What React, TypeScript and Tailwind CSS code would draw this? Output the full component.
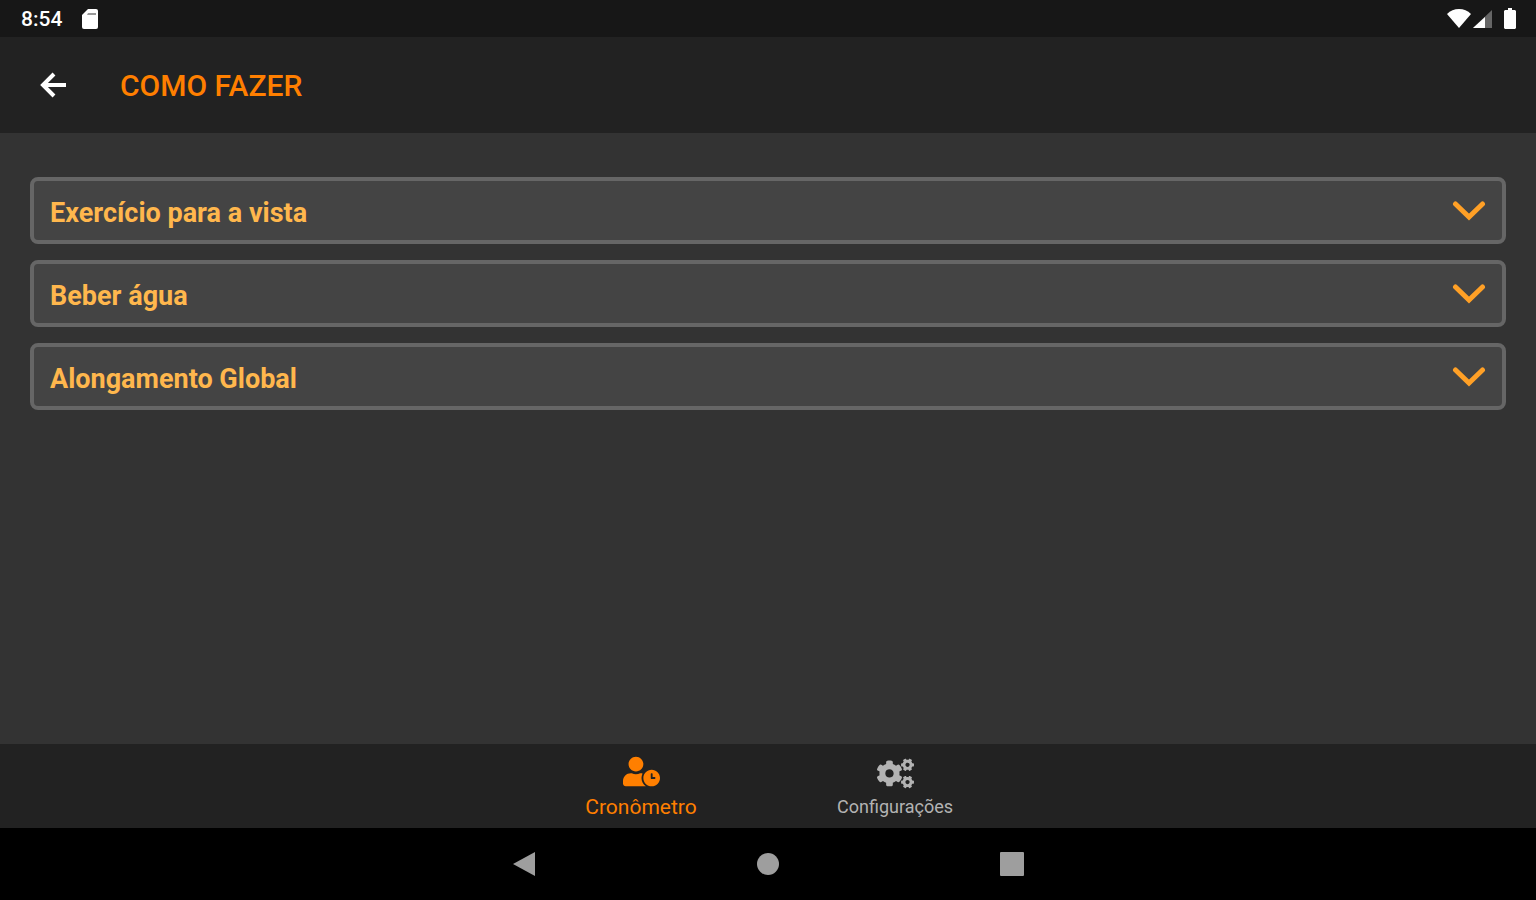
import React, { useState } from 'react';
import { FaCogs, FaUserClock } from 'react-icons/fa';

const TOPICS = ['Exercício para a vista', 'Beber água', 'Alongamento Global'];

function StatusBar() {
  return (
    <div className="flex h-[37px] items-center justify-between bg-[#171717] pl-[21px] pr-5 text-white">
      <div className="flex items-center gap-5">
        <span className="text-[21px] leading-6 font-medium">8:54</span>
        <svg viewBox="0 0 16 20" className="h-5 w-4" fill="currentColor" aria-hidden="true">
          <path d="M6 0h8a2 2 0 0 1 2 2v16a2 2 0 0 1-2 2H2a2 2 0 0 1-2-2V6z" />
          <path d="M6 4h8v2H5z" fill="#999" />
        </svg>
      </div>
      <div className="flex items-center">
        <svg viewBox="0 0 24 19" className="h-[19px] w-6" fill="currentColor" aria-hidden="true">
          <path d="M12 19 0 5Q5 0 12 0t12 5z" />
        </svg>
        <svg viewBox="0 0 19 18" className="ml-0.5 h-[18px] w-[19px]" aria-hidden="true">
          <path d="M19 0v18H0z" fill="#666" />
          <path d="M12 7v11H0z" fill="currentColor" />
        </svg>
        <svg viewBox="0 0 12 21" className="ml-3 h-[21px] w-3" fill="currentColor" aria-hidden="true">
          <path d="M4 0h4v2h3l1 1v17l-1 1H1l-1-1V3l1-1h3z" />
        </svg>
      </div>
    </div>
  );
}

function Topic({ title }: { title: string }) {
  const [open, setOpen] = useState(false);

  return (
    <button
      type="button"
      aria-expanded={open}
      onClick={() => setOpen(!open)}
      className="flex h-[67px] w-full items-center justify-between rounded-lg border-4 border-[#666] bg-[#444] pl-4 pr-4 text-left"
    >
      <span className="pt-1 text-[27px] leading-8 font-bold text-[#ffb74d]">{title}</span>
      <svg
        viewBox="0 0 34 21"
        className={`h-[21px] w-[34px] ${open ? 'rotate-180' : ''}`}
        fill="none"
        stroke="#ffa026"
        strokeWidth="5"
        strokeLinecap="round"
        aria-hidden="true"
      >
        <path d="M3.500 4 17 17 30.500 4" />
      </svg>
    </button>
  );
}

export default function App() {
  return (
    <div className="flex min-h-screen flex-col bg-[#333] font-['Roboto',sans-serif]">
      <StatusBar />

      <header className="flex h-24 items-center bg-[#222] pl-10">
        <button type="button" aria-label="Voltar" className="text-white">
          <svg viewBox="0 0 28 26" className="h-[26px] w-7" fill="none" stroke="currentColor" strokeWidth="4" aria-hidden="true">
            <path d="M14 2 3 13l11 11M3 13h23" />
          </svg>
        </button>
        <h1 className="ml-[52px] pt-0.5 text-[30px] leading-8 font-medium text-[#ff7f00]">COMO FAZER</h1>
      </header>

      <main className="flex flex-1 flex-col gap-4 px-[30px] pt-[44px]">
        {TOPICS.map((title) => (
          <Topic key={title} title={title} />
        ))}
      </main>

      <nav className="flex h-[84px] justify-center bg-[#222]">
        <a href="#cronometro" aria-current="page" className="flex w-[254px] flex-col items-center pt-3 text-[#ff7f00]">
          <FaUserClock className="h-[31px] w-[37px]" />
          <span className="mt-1 text-[21px] leading-8">Cronômetro</span>
        </a>
        <a href="#configuracoes" className="flex w-[254px] flex-col items-center pt-[14px] text-[#b3b3b3]">
          <FaCogs className="h-[31px] w-[37px]" />
          <span className="mt-1 text-lg leading-7">Configurações</span>
        </a>
      </nav>

      <div className="flex h-[72px] items-center justify-center gap-[220px] bg-black text-[#9e9e9e]">
        <button type="button" aria-label="Voltar">
          <svg viewBox="0 0 24 26" className="h-[26px] w-6" fill="currentColor" aria-hidden="true">
            <path d="M23 1v24L1 13z" />
          </svg>
        </button>
        <button type="button" aria-label="Início">
          <svg viewBox="0 0 24 24" className="size-6" fill="currentColor" aria-hidden="true">
            <circle cx="12" cy="12" r="11" />
          </svg>
        </button>
        <button type="button" aria-label="Recentes">
          <svg viewBox="0 0 24 24" className="size-6" fill="currentColor" aria-hidden="true">
            <rect width="24" height="24" rx="1" />
          </svg>
        </button>
      </div>
    </div>
  );
}
